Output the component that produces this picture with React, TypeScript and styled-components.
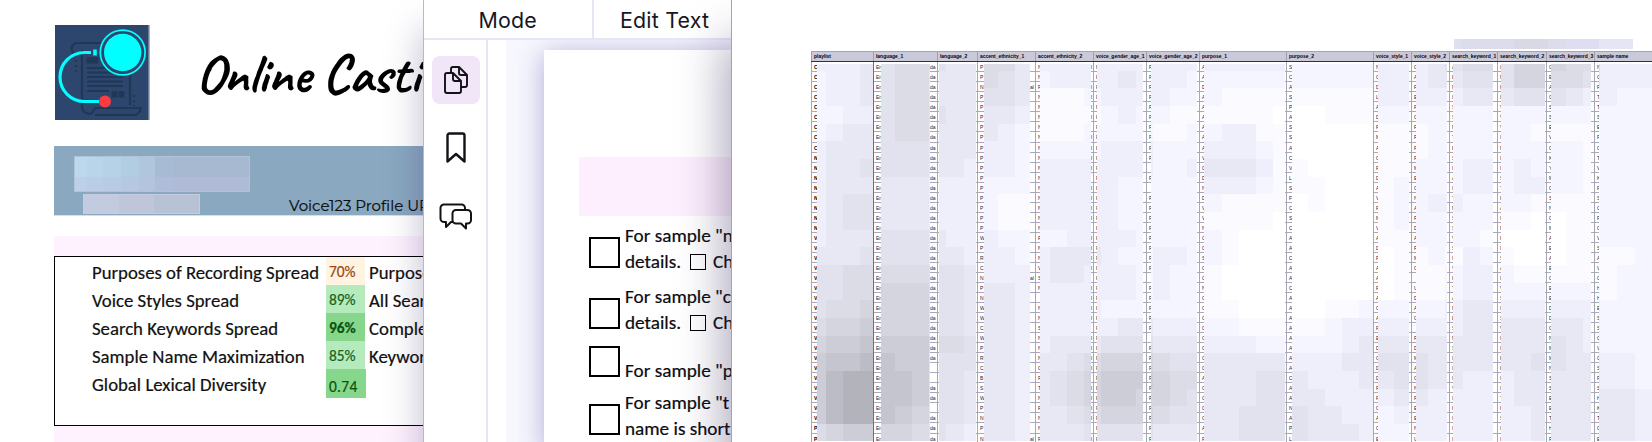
import React from 'react';
import styled, { createGlobalStyle } from 'styled-components';

const GlobalStyle = createGlobalStyle`
    * { box-sizing: border-box; }
    body { margin: 0; background: #fff; overflow: hidden; }
    svg { flex: none; }
`;

const Page = styled.div`
    display: flex;
    width: 1652px;
    height: 442px;
    overflow: hidden;
    background: #fff;
    color: #111;
    font-family: Calibri, Carlito, Lato, "Liberation Sans", sans-serif;
`;

/* ---------- report panel ---------- */

const Report = styled.section`
    flex: 0 0 423px;
    display: flex;
    flex-direction: column;
    padding-left: 54px;
    overflow: hidden;
    white-space: nowrap;
`;

const Brand = styled.header`
    flex: none;
    display: flex;
    height: 146px;
    padding: 25px 0 0 1px;
`;

const BrandTitle = styled.h1`
    margin: 21px 0 0 46px;
    font-family: Caveat, Lato, sans-serif;
    font-size: 54.5px;
    font-weight: 600;
    line-height: 56px;
    letter-spacing: -0.4px;
    color: #000;
`;

const Banner = styled.div`
    flex: none;
    display: flex;
    justify-content: space-between;
    height: 70px;
    margin-bottom: 20px;
    padding: 10px 0 0 20px;
    background: #8aa8c0;
    border-bottom: 1px solid #cfe0f4;
`;

const Hidden = styled.div`
    display: flex;
    flex-direction: column;
    gap: 2px;
`;

const HiddenName = styled.div`
    width: 176px;
    height: 36px;
    border: 1px solid #b1c3d8;
    background:
        linear-gradient(transparent 60%, rgba(190, 190, 225, 0.35) 60%),
        linear-gradient(90deg, #bdd8ed 0 12px, #b9d5e9 12px 28px, #b6d2e6 28px 46px, #b2cde1 46px 64px, #afc6dc 64px 80px, #a8bbd5 80px 98px, #a7b9d1 98px);
`;

const HiddenDetail = styled.div`
    width: 117px;
    height: 20px;
    margin-left: 9px;
    border: 1px solid #c6cbdd;
    background: linear-gradient(90deg, #c3cbe0 0 35px, #bfc6d9 35px 70px, #b7c2d4 70px);
`;

const ProfileUrl = styled.div`
    align-self: flex-end;
    width: 134px;
    height: 20px;
    font-family: Montserrat, Inter, sans-serif;
    font-size: 15px;
    line-height: 22px;
    color: #0b0d10;
    -webkit-text-stroke: 0.2px;
`;

const PinkBand = styled.div`
    flex: none;
    height: 20px;
    background: #fef2fe;
`;

const Scores = styled.div`
    flex: none;
    height: 170px;
    border: 1px solid #000;
    border-right: 0;
`;

const ScoreRow = styled.div`
    display: grid;
    grid-template-columns: 234px 39px 1fr;
    height: 28px;
    margin-left: 37px;
    line-height: 31px;
    font-size: 18.75px;
    -webkit-text-stroke: 0.2px;
`;

const tones = {
    warn: { bg: '#fff3e2', fg: '#a0460c' },
    good: { bg: '#b5eabc', fg: '#17641c' },
    best: { bg: '#86d68b', fg: '#0a5410' },
};

const Score = styled.span<{ $tone: keyof typeof tones; $bold?: boolean; $last?: boolean }>`
    width: ${p => (p.$last ? 40 : 39)}px;
    height: ${p => (p.$last ? 29 : 28)}px;
    padding-left: 3px;
    font-size: 15.4px;
    line-height: ${p => (p.$last ? 36 : 29)}px;
    letter-spacing: ${p => (p.$last ? 0.3 : 0)}px;
    font-weight: ${p => (p.$bold ? 700 : 400)};
    background: ${p => tones[p.$tone].bg};
    color: ${p => tones[p.$tone].fg};
`;

const ScoreNote = styled.span`
    padding-left: 4px;
`;

/* ---------- editor panel ---------- */

const Editor = styled.section`
    position: relative;
    z-index: 1;
    flex: 0 0 308px;
    min-width: 0;
    display: flex;
    flex-direction: column;
    background: #fff;
    border-left: 1px solid #b9b7cc;
    box-shadow: -2px 30px 34px rgba(40, 30, 90, 0.28);
`;

const Toolbar = styled.div`
    display: flex;
    flex: 0 0 40px;
    border-bottom: 2px solid #e6e4f7;
    font-family: Inter, sans-serif;
    font-size: 21.4px;
    line-height: 40px;
    letter-spacing: 0.2px;
    color: #17171f;
    overflow: hidden;
    white-space: nowrap;
`;

const ModeTab = styled.div`
    width: 170px;
    padding-left: 54.5px;
    border-right: 2px solid #e6e4f7;
`;

const EditTab = styled.div`
    padding-left: 26px;
`;

const Workspace = styled.div`
    display: flex;
    flex: 1;
    min-height: 0;
`;

const Sidebar = styled.nav`
    flex: 0 0 64px;
    display: flex;
    flex-direction: column;
    gap: 20px;
    padding: 16px 0 0 8px;
    border-right: 2px solid #e6e4f7;
`;

const Tool = styled.div<{ $active?: boolean }>`
    display: flex;
    align-items: center;
    justify-content: center;
    width: 48px;
    height: 48px;
    border-radius: 8px;
    background: ${p => (p.$active ? '#f0e6f7' : 'transparent')};
`;

const Viewer = styled.div`
    flex: 1;
    min-width: 0;
    margin-left: 18px;
    padding: 10px 0 0 38px;
    background: #f7f7fe;
    overflow: hidden;
`;

const Sheet = styled.div`
    height: 400px;
    padding: 107px 0 0 35px;
    background: #fff;
    box-shadow: 0 4px 26px rgba(60, 50, 150, 0.38);
`;

const SheetBand = styled.div`
    height: 59px;
    background: #fdeffd;
`;

const CheckItem = styled.div<{ $height: number }>`
    display: flex;
    align-items: flex-end;
    height: ${p => p.$height}px;
    padding-left: 10px;
    font-size: 19.2px;
    line-height: 26px;
    white-space: nowrap;
    color: #0b0b0f;
    -webkit-text-stroke: 0.2px;
`;

const Box = styled.span`
    flex: none;
    width: 31px;
    height: 31px;
    margin: 0 5px 7px 0;
    border: 2px solid #000;
`;

const InlineBox = styled.span`
    display: inline-block;
    width: 16px;
    height: 16px;
    margin: 0 7px 0 9px;
    border: 1px solid #000;
    vertical-align: -2px;
`;

/* ---------- spreadsheet panel ---------- */

const Spreadsheet = styled.section`
    position: relative;
    z-index: 2;
    flex: 0 0 921px;
    padding-left: 79px;
    background: #fff;
    border-left: 1px solid #a3a1ba;
    box-shadow: -6px 40px 44px rgba(40, 30, 80, 0.4);
`;

const TitleStrip = styled.div`
    height: 51px;
    padding: 39px 20px 0 643px;
`;

const TitleMask = styled.div`
    height: 10px;
    background: linear-gradient(90deg, #dfdff2 0 8px, #dcdcec 8px 60px, #d9d9e6 60px 94px, #dcdcea 94px 112px, #dedef0 112px 145px, #e5e5f5 145px);
`;

const HeaderRow = styled.div`
    display: flex;
    height: 11px;
    border-top: 1px solid #a4a4b4;
    border-bottom: 1px solid #30303c;
    background: #c9c9da;
`;

const HeaderCell = styled.div<{ $width: number }>`
    flex: 0 0 ${p => p.$width}px;
    padding-left: 2px;
    border-left: 1px solid #a0a0b0;
    font: bold 4.95px/10px "Liberation Sans", Arial, sans-serif;
    white-space: nowrap;
    color: #000;
`;

const Body = styled.div`
    display: grid;
    height: 380px;
    overflow: hidden;
`;

const Mosaic = styled.div`
    grid-area: 1 / 1;
    display: grid;
    grid-template-columns: 15px repeat(48, 17.21px);
    grid-template-rows: 6.7px repeat(21, 17.67px);
    margin-top: 2px;
    overflow: hidden;
`;

const Tile = styled.i<{ $color: string }>`
    background: ${p => p.$color};
`;

const Columns = styled.div`
    grid-area: 1 / 1;
    display: flex;
`;

const Column = styled.div<{ $width: number; $dark?: boolean }>`
    flex: 0 0 ${p => p.$width}px;
    display: flex;
    justify-content: space-between;
    border-left: 1px solid ${p => (p.$dark ? '#70707c' : '#a6a6b6')};
`;

const Strip = styled.div<{ $width: number; $bold?: boolean; $indent: number }>`
    width: ${p => p.$width}px;
    background: #fff;
    overflow: hidden;
    font: ${p => (p.$bold ? 'bold' : 'normal')} 5px/10px "Liberation Sans", Arial, sans-serif;
    text-indent: ${p => p.$indent}px;
    color: ${p => (p.$bold ? '#000' : '#23232e')};
`;

const Cell = styled.div<{ $tall: boolean }>`
    height: ${p => (p.$tall ? 11 : 10)}px;
    border-bottom: 1px solid #a9a9b9;
    white-space: nowrap;
`;

const palette = ['#ffffff', '#fafaff', '#f5f5ff', '#efeffc', '#e8e8f5', '#e2e2ee', '#dcdce7', '#d5d5e0', '#cdcdd8', '#c5c5cf', '#bcbcc6', '#b3b3bc'];

// one hex digit per tile, an index into the palette
const mosaic = [
    '3334 566 544 664 3333 333 333 33333 22222 333 45 665 777 66 333',
    '2334 566 444 654 2333 343 332 22222 22222 333 44 555 776 65 333',
    '2334 566 444 554 1112 333 322 21111 11111 333 33 444 555 43 322',
    '2233 566 544 443 1111 232 211 11110 00111 222 22 222 222 22 222',
    '2344 566 444 432 1112 222 112 23311 00000 111 22 222 211 11 222',
    '3444 555 444 332 2222 333 222 33321 00000 111 22 222 222 21 222',
    '3445 555 443 332 3333 333 223 44431 10000 112 22 332 322 21 222',
    '3444 444 333 222 3333 322 222 33321 11000 122 22 332 332 21 222',
    '3455 444 333 211 3333 322 222 21111 01000 122 33 222 211 11 222',
    '3455 444 333 211 3333 322 222 11110 00000 122 22 221 100 11 222',
    '3444 555 433 322 2233 332 222 21000 00000 112 22 210 000 11 222',
    '4445 555 443 332 3444 322 332 21000 00000 011 21 321 000 11 112',
    '5566 666 554 333 3443 332 322 10000 00000 011 12 332 111 11 122',
    '5566 777 554 443 3333 332 322 10000 00000 011 12 332 222 22 122',
    '5667 777 554 443 3333 222 222 11000 00112 222 23 443 333 33 222',
    '6778 777 554 443 3333 344 333 22111 11233 333 33 444 444 43 222',
    '7889 888 665 443 3444 555 444 33322 22234 444 44 444 445 43 222',
    '899a 988 555 443 4456 777 655 44444 33344 555 44 444 455 44 332',
    '8abb 998 554 443 4567 888 766 44455 43334 455 44 333 444 44 332',
    '8abb 998 554 443 4567 887 765 44455 44333 344 33 333 444 44 443',
    '8abb 987 554 443 4456 777 655 44555 54433 233 33 333 344 44 443',
    '6788 776 543 443 4445 555 444 44555 54443 223 33 333 344 44 443',
].map(row => row.replace(/ /g, '').split(''));

interface ColumnData {
    name: string;
    width: number;
    lead: number;
    trail: number;
    cells: string;
    tail?: (row: number) => string;
    bold?: boolean;
    dark?: boolean;
}

const columns: ColumnData[] = [
    { name: 'playlist', width: 62, lead: 5, trail: 0, cells: 'CCCCCCCCCNNNNNNNNVVVVVVVVVVVVVVVVVVVPP', bold: true },
    { name: 'language_1', width: 64, lead: 7, trail: 7, cells: 'E'.repeat(38), tail: row => ([30, 31, 34].includes(row) ? '' : 'da'), dark: true },
    { name: 'language_2', width: 40, lead: 1, trail: 1, cells: ' '.repeat(38) },
    { name: 'accent_ethnicity_1', width: 58, lead: 6, trail: 5, cells: 'PPNPPPPPPPPPPPPPPWPRCNPNWWCWPRCBSWPNPN', tail: row => ([2, 21, 37].includes(row) ? 'al' : '') },
    { name: 'accent_ethnicity_2', width: 58, lead: 4, trail: 2, cells: 'NNFNNNNNNNNNNNNNNFNNVSN NNSNNNCFTNFNNF', tail: row => (row % 5 === 1 ? '' : 'l') },
    { name: 'voice_gender_age_1', width: 53, lead: 3, trail: 3, cells: 'F'.repeat(38) },
    { name: 'voice_gender_age_2', width: 53, lead: 4, trail: 2, cells: 'FFFFFFFFFF F FFFFFFFF FFFFF FFFFFFFFFF' },
    { name: 'purpose_1', width: 87, lead: 4, trail: 1, cells: 'AADAAAAAAVCDNDVVNCCSCCNCCCCCCCCACCCCAF' },
    { name: 'purpose_2', width: 87, lead: 5, trail: 0, cells: 'SCASPASSACVLSFCSCAACAACAAAAAAAACAANAPL' },
    { name: 'voice_style_1', width: 38, lead: 4, trail: 2, cells: 'NCDLADFMACFDAVFMVADFAAFACAFEDCDDFFCACE' },
    { name: 'voice_style_2', width: 38, lead: 4, trail: 2, cells: 'CAFEFCFFFFMECNAFDAFMC UDAC FDMACNFEENU' },
    { name: 'search_keyword_1', width: 48, lead: 3, trail: 4, cells: 'AEMISSMTESIAITMSSVSIVKTAMESMSIIIVIKIII' },
    { name: 'search_keyword_2', width: 49, lead: 3, trail: 1, cells: 'IMKIVVVIMIISTKAIMKISAIVSISVIIKKIITKSII' },
    { name: 'search_keyword_3', width: 48, lead: 4, trail: 3, cells: 'CEACSSEVCKYMCSNCMAEAECEEDDCNMMNSSEETHF' },
    { name: 'sample name', width: 59, lead: 4, trail: 0, cells: 'NCFTTSEFCTVKFSCFCVSAVCHHESSCVCSFSHKTCE' },
];

const isTall = (row: number) => row === 7 || row === 36;

const Logo = () => (
    <svg width="95" height="95" viewBox="0 0 95 95">
        <rect width="95" height="95" fill="#2c466d" />
        <rect x="93.5" width="1.5" height="95" fill="#a9afcb" />
        <g fill="none" stroke="#203756" strokeWidth="2.2">
            <path d="M22 18H68M22 18a5.5 5.5 0 1 0 0 11h4M27 25V82a7 7 0 0 0 10 6l3-5H86q-2 7-7 7H40M75 50V80" />
            <path d="M32 43H68M32 47.5H68M32 52H68M32 56.5H68M32 61H68M32 66H54" />
            <path d="M21 35v14M79 70v11" strokeDasharray="2 3" />
            <path d="M33 32v5h3v-5M39 32v5h3v-5M58 66v5h3v-5M65 66v5h3v-5" strokeWidth="3" />
        </g>
        <path d="M36 27.5H29.5A24.5 24.5 0 0 0 29.5 76.5H44" fill="none" stroke="#00ffff" strokeWidth="3.2" />
        <path d="M40 24.5v6" stroke="#00ffff" strokeWidth="3.6" />
        <circle cx="67.7" cy="27.5" r="22.4" fill="#2c466d" stroke="#00ffff" strokeWidth="1.7" />
        <circle cx="67.7" cy="27.5" r="18.7" fill="#00ffff" />
        <circle cx="50" cy="76.5" r="6" fill="#ff3b42" />
    </svg>
);

const PagesIcon = () => (
    <svg width="26" height="30" viewBox="0 0 26 30" fill="none" stroke="#121217" strokeWidth="1.9" strokeLinejoin="round">
        <path d="M4 8H10L18 16V26a2 2 0 0 1-2 2H4a2 2 0 0 1-2-2V10a2 2 0 0 1 2-2Z" />
        <path d="M10 8V14a2 2 0 0 0 2 2H18" />
        <path d="M8 8V4a2 2 0 0 1 2-2H16L24 10V20a2 2 0 0 1-2 2H18M16 2V8a2 2 0 0 0 2 2H24" />
    </svg>
);

const BookmarkIcon = () => (
    <svg width="20" height="32" viewBox="0 0 20 32" fill="none" stroke="#121217" strokeWidth="2.4" strokeLinejoin="round">
        <path d="M1.5 3.5a2 2 0 0 1 2-2H16.5a2 2 0 0 1 2 2V29.5L10 22 1.5 29.5Z" />
    </svg>
);

const CommentsIcon = () => (
    <svg width="34" height="28" viewBox="0 -1 34 28" fill="none" stroke="#121217" strokeWidth="2" strokeLinejoin="round">
        <path d="M26 7V5a3.5 3.5 0 0 0-3.5-3.5H5A3.5 3.5 0 0 0 1.5 5V15.5A3.5 3.5 0 0 0 5 19H7V24L12 19H14" />
        <path d="M17 7H28.5a3.5 3.5 0 0 1 3.5 3.5V17a3.5 3.5 0 0 1-3.5 3.5H27V25.5L22 20.5H17A3.5 3.5 0 0 1 13.5 17V10.5A3.5 3.5 0 0 1 17 7Z" />
    </svg>
);

const ReportPanel = () => (
    <Report>
        <Brand>
            <Logo />
            <BrandTitle>Online Casting</BrandTitle>
        </Brand>
        <Banner>
            <Hidden>
                <HiddenName />
                <HiddenDetail />
            </Hidden>
            <ProfileUrl>Voice123 Profile URL</ProfileUrl>
        </Banner>
        <PinkBand />
        <Scores>
            <ScoreRow>Purposes of Recording Spread<Score $tone="warn">70%</Score><ScoreNote>Purpose</ScoreNote></ScoreRow>
            <ScoreRow>Voice Styles Spread<Score $tone="good">89%</Score><ScoreNote>All Search</ScoreNote></ScoreRow>
            <ScoreRow>Search Keywords Spread<Score $tone="best" $bold>96%</Score><ScoreNote>Complete</ScoreNote></ScoreRow>
            <ScoreRow>Sample Name Maximization<Score $tone="good">85%</Score><ScoreNote>Keyword</ScoreNote></ScoreRow>
            <ScoreRow>Global Lexical Diversity<Score $tone="best" $last>0.74</Score></ScoreRow>
        </Scores>
        <PinkBand />
    </Report>
);

const EditorPanel = () => (
    <Editor>
        <Toolbar>
            <ModeTab>Mode</ModeTab>
            <EditTab>Edit Text</EditTab>
        </Toolbar>
        <Workspace>
            <Sidebar>
                <Tool $active><PagesIcon /></Tool>
                <Tool><BookmarkIcon /></Tool>
                <Tool><CommentsIcon /></Tool>
            </Sidebar>
            <Viewer>
                <Sheet>
                    <SheetBand />
                    <CheckItem $height={59}><Box /><div>For sample "n<br />details.<InlineBox />Ch</div></CheckItem>
                    <CheckItem $height={61}><Box /><div>For sample "c<br />details.<InlineBox />Ch</div></CheckItem>
                    <CheckItem $height={48}><Box /><div>For sample "p</div></CheckItem>
                    <CheckItem $height={58}><Box /><div>For sample "t<br />name is short</div></CheckItem>
                </Sheet>
            </Viewer>
        </Workspace>
    </Editor>
);

const SpreadsheetPanel = () => (
    <Spreadsheet>
        <TitleStrip><TitleMask /></TitleStrip>
        <HeaderRow>
            {columns.map(col => <HeaderCell key={col.name} $width={col.width}>{col.name}</HeaderCell>)}
        </HeaderRow>
        <Body>
            <Mosaic>
                {mosaic.map((row, y) => row.map((level, x) => (
                    <Tile key={`${y}-${x}`} $color={palette[parseInt(level, 16)]} />
                )))}
            </Mosaic>
            <Columns>
                {columns.map(col => (
                    <Column key={col.name} $width={col.width} $dark={col.dark}>
                        <Strip $width={col.lead} $bold={col.bold} $indent={2}>
                            {col.cells.split('').map((text, row) => (
                                <Cell key={row} $tall={isTall(row)}>{text === 'E' && col.dark ? 'En' : text}</Cell>
                            ))}
                        </Strip>
                        <Strip $width={col.trail} $indent={0}>
                            {col.cells.split('').map((_, row) => (
                                <Cell key={row} $tall={isTall(row)}>{col.tail ? col.tail(row) : ''}</Cell>
                            ))}
                        </Strip>
                    </Column>
                ))}
            </Columns>
        </Body>
    </Spreadsheet>
);

const App: React.FC = () => (
    <>
        <GlobalStyle />
        <Page>
            <ReportPanel />
            <EditorPanel />
            <SpreadsheetPanel />
        </Page>
    </>
);

export default App;
